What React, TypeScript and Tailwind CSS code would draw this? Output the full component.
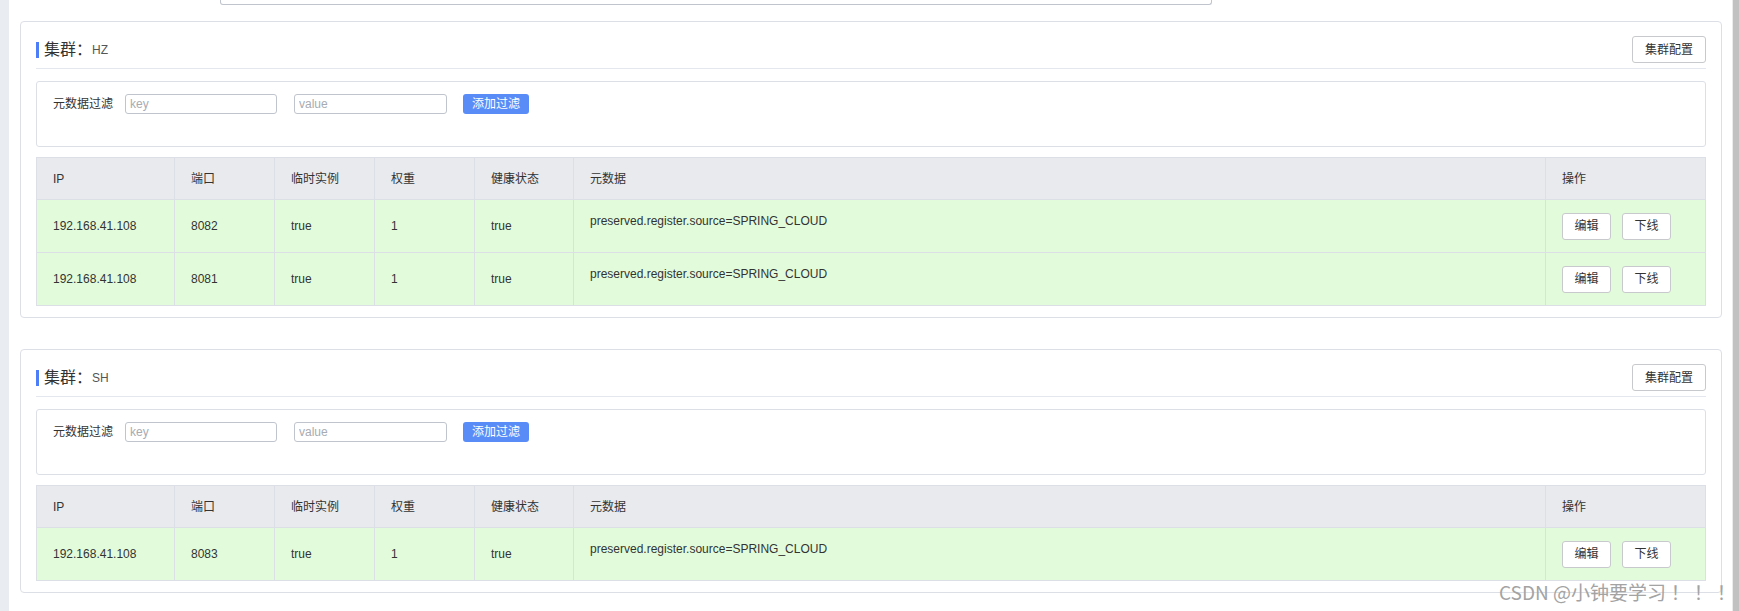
import React from "react";

type Row = { ip: string; port: string };

const FONT = { fontFamily: '"Liberation Sans", "Noto Sans CJK SC", sans-serif' };

function Cluster({ name, rows }: { name: string; rows: Row[] }) {
  return (
    <div className="ml-[11px] w-[1702px] rounded-[4px] border border-[#dcdfe6] bg-white px-[15px] pb-[11px] pt-[14px]">
      <div className="flex h-[27px] items-center justify-between">
        <div className="flex items-center">
          <span className="h-[16px] w-[3px] bg-[#4d7ef7]" />
          <span className="ml-[5px] text-[16px] leading-none text-[#333]">集群：</span>
          <span className="text-[12px] leading-none text-[#555]">{name}</span>
        </div>
        <button className="h-[27px] w-[74px] rounded-[3px] border border-[#c8c9cc] bg-white text-[12px] text-[#333]">
          集群配置
        </button>
      </div>
      <div className="mt-[5px] border-t border-[#e4e7ed]" />
      <div className="mt-[12px] flex items-center rounded-[3px] border border-[#dcdfe6] pb-[32px] pl-[16px] pt-[12px]">
        <span className="text-[12px] text-[#333]">元数据过滤</span>
        <input
          className="ml-[12px] h-[20px] w-[152px] rounded-[3px] border border-[#c0c4cc] px-[4px] text-[12px] outline-none placeholder:text-[#a8abb2]"
          placeholder="key"
        />
        <input
          className="ml-[17px] h-[20px] w-[153px] rounded-[3px] border border-[#c0c4cc] px-[4px] text-[12px] outline-none placeholder:text-[#a8abb2]"
          placeholder="value"
        />
        <button className="ml-[16px] h-[20px] w-[66px] rounded-[3px] bg-[#5a8cf8] text-[12px] text-white">
          添加过滤
        </button>
      </div>
      <table className="mt-[10px] w-full table-fixed border-collapse text-[12px] text-[#333]">
        <colgroup>
          <col className="w-[138px]" />
          <col className="w-[100px]" />
          <col className="w-[100px]" />
          <col className="w-[100px]" />
          <col className="w-[99px]" />
          <col />
          <col className="w-[160px]" />
        </colgroup>
        <thead>
          <tr className="h-[42px] bg-[#e9eaee]">
            {["IP", "端口", "临时实例", "权重", "健康状态", "元数据", "操作"].map((h) => (
              <th key={h} className="border border-[#dcdfe6] px-[16px] text-left font-normal">
                {h}
              </th>
            ))}
          </tr>
        </thead>
        <tbody>
          {rows.map((r) => (
            <tr key={r.port} className="h-[53px] bg-[#e2fcdb]">
              <td className="border border-[#dcdfe6] px-[16px]">{r.ip}</td>
              <td className="border border-[#dcdfe6] px-[16px]">{r.port}</td>
              <td className="border border-[#dcdfe6] px-[16px]">true</td>
              <td className="border border-[#dcdfe6] px-[16px]">1</td>
              <td className="border border-[#dcdfe6] px-[16px]">true</td>
              <td className="border border-[#dcdfe6] px-[16px] pt-[12px] align-top leading-[18px]">
                preserved.register.source=SPRING_CLOUD
              </td>
              <td className="border border-[#dcdfe6] px-[16px]">
                <div className="flex gap-[11px]">
                  <button className="h-[27px] w-[49px] rounded-[3px] border border-[#c8c9cc] bg-white text-[12px] text-[#333]">
                    编辑
                  </button>
                  <button className="h-[27px] w-[49px] rounded-[3px] border border-[#c8c9cc] bg-white text-[12px] text-[#333]">
                    下线
                  </button>
                </div>
              </td>
            </tr>
          ))}
        </tbody>
      </table>
    </div>
  );
}

export default function App() {
  return (
    <div className="relative flex h-[611px] w-[1739px] overflow-hidden bg-white" style={FONT}>
      <div className="w-[9px] shrink-0 bg-[#e9ecf1]" />
      <div className="flex-1">
        <div className="ml-[211px] h-[5px] w-[992px] rounded-b-[3px] border-x border-b border-[#c0c4cc]" />
        <div className="mt-[16px]">
          <Cluster
            name="HZ"
            rows={[
              { ip: "192.168.41.108", port: "8082" },
              { ip: "192.168.41.108", port: "8081" },
            ]}
          />
        </div>
        <div className="mt-[31px]">
          <Cluster name="SH" rows={[{ ip: "192.168.41.108", port: "8083" }]} />
        </div>
      </div>
      <div className="flex w-[7px] shrink-0">
        <div className="w-[1px] bg-[#ebebeb]" />
        <div className="flex-1 bg-[#c1c1c1]" />
      </div>
      <div
        className="absolute left-[1499px] top-[580px] whitespace-nowrap text-[19px] leading-[24px] text-[#a3a3a3]"
        style={{ fontFamily: '"Noto Sans CJK SC", sans-serif' }}
      >
        CSDN @小钟要学习
        <span
          className="tracking-[4px]"
          style={{ fontFamily: '"Noto Sans CJK JP", sans-serif' }}
        >
          ！！！
        </span>
      </div>
    </div>
  );
}
